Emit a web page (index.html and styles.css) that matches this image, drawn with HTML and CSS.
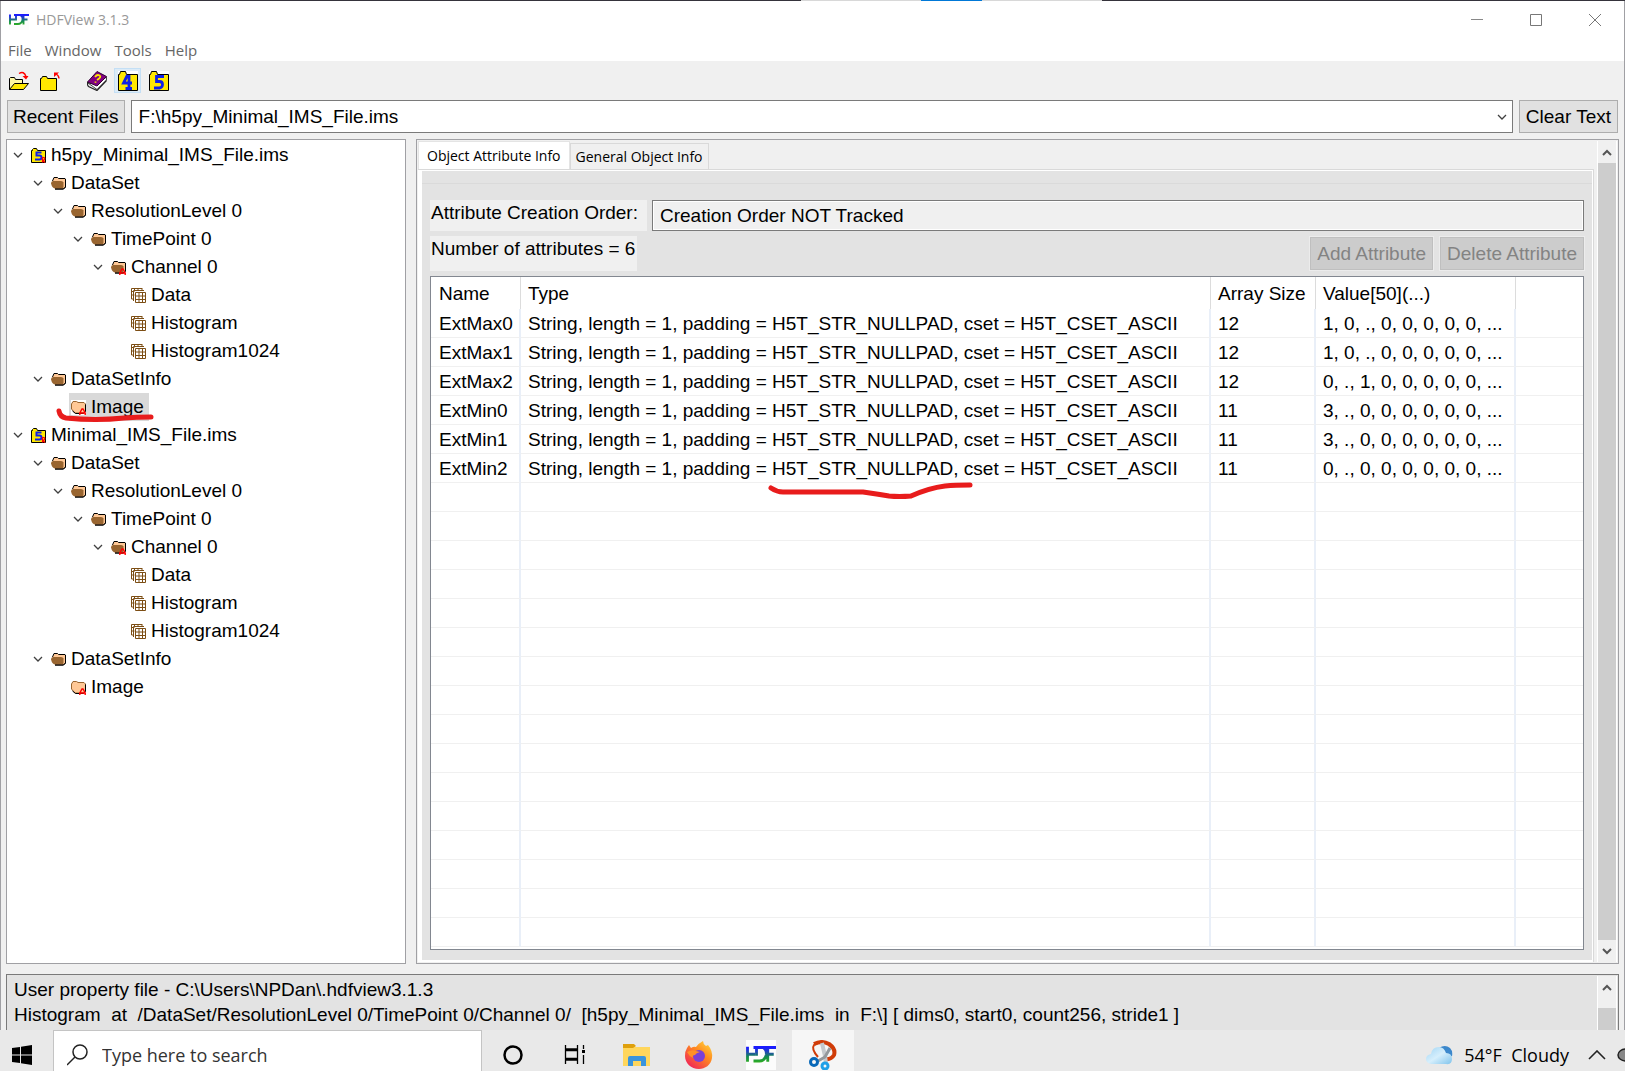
FILE: index.html
```html
<!DOCTYPE html>
<html lang="en">
<head>
<meta charset="utf-8">
<title>HDFView 3.1.3</title>
<link rel="stylesheet" href="styles.css">
</head>
<body>
<svg class="defs" aria-hidden="true">
  <defs>
    <linearGradient id="hdfGrad" gradientUnits="userSpaceOnUse" x1="0" y1="4" x2="0" y2="15">
      <stop offset="0.1" stop-color="#1a1aff"/><stop offset="0.4" stop-color="#2050a8"/><stop offset="0.65" stop-color="#128a50"/><stop offset="1" stop-color="#2fae20"/>
    </linearGradient>
    <linearGradient id="foxGrad" x1="1" y1="0" x2="0.2" y2="1">
      <stop offset="0" stop-color="#ffe040"/><stop offset="0.45" stop-color="#ff8a20"/><stop offset="1" stop-color="#f0205a"/>
    </linearGradient>
    <linearGradient id="cloudGrad" x1="0" y1="0" x2="1" y2="1">
      <stop offset="0" stop-color="#9fd4f4"/><stop offset="0.5" stop-color="#d6effc"/><stop offset="1" stop-color="#7fc3ec"/>
    </linearGradient>
    <symbol id="hdf" viewBox="0 0 20 20">
      <rect width="20" height="20" fill="#fcfcfc"/>
      <path d="M1 4.500v10M1 9.500h5M7 4.500v6M5 5h6q3 1 2.500 5-1 4-4.500 4H5M20 5h-9M13.500 9.500h5M14.500 5v9.500" fill="none" stroke="url(#hdfGrad)" stroke-width="1.900"/>
    </symbol>
    <symbol id="chev" viewBox="0 0 10 6"><path d="M1 1l4 4 4-4" fill="none" stroke="#404040" stroke-width="1.300"/></symbol>
    <symbol id="file5" viewBox="0 0 15 15">
      <path d="M.5 2.500h1v-1l1-1h3l1 2h8v12H.5z" fill="#ffe800" stroke="#000"/>
      <path d="M10.500 4.500H5.500v3h3q2 0 2 2t-2 2H4" fill="none" stroke="#1020e8" stroke-width="2"/>
      <path d="M11.500 14.500v-5h1.500q1.500 1 0 2.500h-1.500l2.500 2.500" fill="none" stroke="#f00" stroke-width="1.200"/>
    </symbol>
    <symbol id="folder" viewBox="0 0 15 15">
      <path d="M1.500 5L3 1.500h3.500l1 1h6.500l.5.500v8l-2 2H4" fill="#ffc896" stroke="#000"/>
      <path d="M0 7.500Q0 5 2 5h8q2 0 2.500 1.500V11q0 1.500-1.500 1.500H4Q1 12 0 7.500z" fill="#996530"/>
      <path d="M4 13h8.500l2-2" fill="none" stroke="#000"/>
    </symbol>
    <symbol id="attr" viewBox="0 0 7 7"><path d="M.8 7V5L3 1h1l2.200 4v2M1 5h5" fill="none" stroke="#f00" stroke-width="1.400"/></symbol>
    <symbol id="folderA" viewBox="0 0 15 15">
      <use href="#folder" width="15" height="15"/><use href="#attr" x="8" y="8" width="7" height="7"/>
    </symbol>
    <symbol id="groupA" viewBox="0 0 15 15">
      <rect width="15" height="15" fill="#fff"/>
      <path d="M.5 4L2 1.500h3.500l1.500 1h6L14.500 4v7l-2 2H4L.5 9z" fill="#ffc896" stroke="#996530"/>
      <path d="M1.500 11l3 2.500h8l2-2V4.500" fill="none" stroke="#000"/>
      <use href="#attr" x="8" y="8" width="7" height="7"/>
    </symbol>
    <symbol id="data" viewBox="0 0 15 15">
      <path d="M.5 11V.5H11M2.500 13V2.500H13M.5 3.500h3M.5 7h3M.5 11h2M3.500 0v3M7 0v3M11 0v3M4.500 4.500h10v10h-10zM4.500 8h10M4.500 11.500h10M8 4.500v10M11.500 4.500v10" fill="none" stroke="#7d4e14"/>
    </symbol>
    <symbol id="open" viewBox="0 0 20 20">
      <path d="M.5 18.500v-11l1-1h4l1 2h7v4" fill="#fff8a0" stroke="#000"/>
      <path d="M.5 18.500l5-6h14l-5 6z" fill="#ffe800" stroke="#000"/>
      <path d="M10 2.500q5-3 7 3" fill="none" stroke="#f00" stroke-width="1.400"/><path d="M13.500 5h6l-2.500 3.500z" fill="#f00"/>
    </symbol>
    <symbol id="close" viewBox="0 0 20 20">
      <path d="M.5 7.500h1l1-2h4l1 2h9v12H.5z" fill="#ffe800" stroke="#000"/>
      <path d="M19 7.500q0-3-3.500-5" fill="none" stroke="#f00" stroke-width="1.400"/><path d="M14 1.500h5l-5 4.500z" fill="#f00"/>
    </symbol>
    <symbol id="book" viewBox="0 0 20 20">
      <path d="M1 12l9 6.500L19.500 9V6L10 13z" fill="#fff" stroke="#444"/>
      <path d="M.5 11L10 .5l9.500 5L10 15z" fill="#800080" stroke="#303"/>
      <path d="M.5 11q-.5 3 1 4.500l8.500 4 9.500-10" fill="none" stroke="#222" stroke-width="1.200"/>
      <path d="M8 6q2-3 4.500-1.500T10 9M8.500 10.500v1.200" fill="none" stroke="#ffe800" stroke-width="1.800"/>
    </symbol>
    <symbol id="f4" viewBox="0 0 20 20">
      <rect width="20" height="20" fill="#fff"/>
      <path d="M.5 3.500h1l1-3h5l1 3h11v16H.5z" fill="#ffe800" stroke="#000"/>
      <path d="M9.500 4L5.500 12H14M11 4v14M7.500 17.500H14" fill="none" stroke="#1020e8" stroke-width="2.800"/>
    </symbol>
    <symbol id="f5" viewBox="0 0 20 20">
      <rect width="20" height="20" fill="#fff"/>
      <path d="M.5 3.500h1l1-3h5l1 3h11v16H.5z" fill="#ffe800" stroke="#000"/>
      <path d="M15 5.500H7.500v5h3q3 0 3 3t-3 3.500H5" fill="none" stroke="#1020e8" stroke-width="2.800"/>
    </symbol>
    <symbol id="up" viewBox="0 0 10 7"><path d="M1 6l4-4 4 4" fill="none" stroke="#555" stroke-width="2"/></symbol>
    <symbol id="down" viewBox="0 0 10 7"><path d="M1 1l4 4 4-4" fill="none" stroke="#555" stroke-width="2"/></symbol>
  </defs>
</svg>

<div class="edge"></div>
<div class="window">
  <header class="chrome">
    <div class="titlebar">
      <svg class="i20"><use href="#hdf"/></svg>
      <span class="title">HDFView 3.1.3</span>
      <div class="winbtns">
        <button aria-label="Minimize"><svg width="12" height="12"><path d="M0 5.500h12" stroke="#888" fill="none"/></svg></button>
        <button aria-label="Maximize"><svg width="12" height="12"><path d="M.5.500h11v11H.5z" stroke="#777" fill="none"/></svg></button>
        <button aria-label="Close"><svg width="12" height="12"><path d="M0 0l12 12M12 0L0 12" stroke="#777" fill="none"/></svg></button>
      </div>
    </div>
    <nav class="menu">
      <button>File</button><button>Window</button><button>Tools</button><button>Help</button>
    </nav>
  </header>

  <div class="toolbar">
    <button aria-label="Open"><svg class="i20"><use href="#open"/></svg></button>
    <button aria-label="Close file"><svg class="i20"><use href="#close"/></svg></button>
    <button class="book" aria-label="Help"><svg class="i20"><use href="#book"/></svg></button>
    <button class="hot" aria-label="HDF4 library"><svg class="i20"><use href="#f4"/></svg></button>
    <button aria-label="HDF5 library"><svg class="i20"><use href="#f5"/></svg></button>
  </div>

  <div class="address">
    <button class="btn">Recent Files</button>
    <div class="combo">
      <input type="text" aria-label="File path" value="F:\h5py_Minimal_IMS_File.ims">
      <svg class="chev"><use href="#chev"/></svg>
    </div>
    <button class="btn wide">Clear Text</button>
  </div>

  <main class="split">
    <ul class="tree">
      <li class="d0"><svg class="chev"><use href="#chev"/></svg><svg class="i15"><use href="#file5"/></svg><span>h5py_Minimal_IMS_File.ims</span></li>
      <li class="d1"><svg class="chev"><use href="#chev"/></svg><svg class="i15"><use href="#folder"/></svg><span>DataSet</span></li>
      <li class="d2"><svg class="chev"><use href="#chev"/></svg><svg class="i15"><use href="#folder"/></svg><span>ResolutionLevel 0</span></li>
      <li class="d3"><svg class="chev"><use href="#chev"/></svg><svg class="i15"><use href="#folder"/></svg><span>TimePoint 0</span></li>
      <li class="d4"><svg class="chev"><use href="#chev"/></svg><svg class="i15"><use href="#folderA"/></svg><span>Channel 0</span></li>
      <li class="d5 leaf"><svg class="i15"><use href="#data"/></svg><span>Data</span></li>
      <li class="d5 leaf"><svg class="i15"><use href="#data"/></svg><span>Histogram</span></li>
      <li class="d5 leaf"><svg class="i15"><use href="#data"/></svg><span>Histogram1024</span></li>
      <li class="d1"><svg class="chev"><use href="#chev"/></svg><svg class="i15"><use href="#folder"/></svg><span>DataSetInfo</span></li>
      <li class="d2 leaf"><div class="picked"><svg class="i15"><use href="#groupA"/></svg><span>Image</span>
        <svg class="mark mark-tree" viewBox="0 0 96 16"><path d="M2 3q1 6 7 7q30 3 58 0q12-1 27-1" fill="none" stroke="#e81c1c" stroke-width="5" stroke-linecap="round"/></svg></div></li>
      <li class="d0"><svg class="chev"><use href="#chev"/></svg><svg class="i15"><use href="#file5"/></svg><span>Minimal_IMS_File.ims</span></li>
      <li class="d1"><svg class="chev"><use href="#chev"/></svg><svg class="i15"><use href="#folder"/></svg><span>DataSet</span></li>
      <li class="d2"><svg class="chev"><use href="#chev"/></svg><svg class="i15"><use href="#folder"/></svg><span>ResolutionLevel 0</span></li>
      <li class="d3"><svg class="chev"><use href="#chev"/></svg><svg class="i15"><use href="#folder"/></svg><span>TimePoint 0</span></li>
      <li class="d4"><svg class="chev"><use href="#chev"/></svg><svg class="i15"><use href="#folderA"/></svg><span>Channel 0</span></li>
      <li class="d5 leaf"><svg class="i15"><use href="#data"/></svg><span>Data</span></li>
      <li class="d5 leaf"><svg class="i15"><use href="#data"/></svg><span>Histogram</span></li>
      <li class="d5 leaf"><svg class="i15"><use href="#data"/></svg><span>Histogram1024</span></li>
      <li class="d1"><svg class="chev"><use href="#chev"/></svg><svg class="i15"><use href="#folder"/></svg><span>DataSetInfo</span></li>
      <li class="d2 leaf"><svg class="i15"><use href="#groupA"/></svg><span>Image</span></li>
    </ul>

    <section class="detail">
      <div class="tabwrap">
        <div class="tabs" role="tablist">
          <button class="tab on" role="tab" aria-selected="true">Object Attribute Info</button>
          <button class="tab" role="tab" aria-selected="false">General Object Info</button>
        </div>
        <div class="page">
          <div class="group">
            <div class="order">
              <label for="order">Attribute Creation Order:</label>
              <input id="order" type="text" readonly value="Creation Order NOT Tracked">
            </div>
            <div class="count">
              <span class="num">Number of attributes = 6</span>
              <button class="btn" disabled>Add Attribute</button>
              <button class="btn" disabled>Delete Attribute</button>
            </div>
            <div class="gridbox">
              <table>
                <colgroup><col class="c1"><col class="c2"><col class="c3"><col class="c4"><col></colgroup>
                <thead><tr><th>Name</th><th>Type</th><th>Array Size</th><th>Value[50](...)</th><th></th></tr></thead>
                <tbody>
                  <tr><td>ExtMax0</td><td>String, length = 1, padding = H5T_STR_NULLPAD, cset = H5T_CSET_ASCII</td><td>12</td><td>1, 0, ., 0, 0, 0, 0, 0, ...</td><td></td></tr>
                  <tr><td>ExtMax1</td><td>String, length = 1, padding = H5T_STR_NULLPAD, cset = H5T_CSET_ASCII</td><td>12</td><td>1, 0, ., 0, 0, 0, 0, 0, ...</td><td></td></tr>
                  <tr><td>ExtMax2</td><td>String, length = 1, padding = H5T_STR_NULLPAD, cset = H5T_CSET_ASCII</td><td>12</td><td>0, ., 1, 0, 0, 0, 0, 0, ...</td><td></td></tr>
                  <tr><td>ExtMin0</td><td>String, length = 1, padding = H5T_STR_NULLPAD, cset = H5T_CSET_ASCII</td><td>11</td><td>3, ., 0, 0, 0, 0, 0, 0, ...</td><td></td></tr>
                  <tr><td>ExtMin1</td><td>String, length = 1, padding = H5T_STR_NULLPAD, cset = H5T_CSET_ASCII</td><td>11</td><td>3, ., 0, 0, 0, 0, 0, 0, ...</td><td></td></tr>
                  <tr><td>ExtMin2</td><td>String, length = 1, padding = <span class="marked">H5T_STR_NULLPAD<svg class="mark mark-cell" viewBox="0 0 204 18"><path d="M3 4q6 4 12 4h80q14 2 26 4 10 1 22 0 18-8 34-10 10-1 25-1" fill="none" stroke="#e81c1c" stroke-width="5" stroke-linecap="round"/></svg></span>, cset = H5T_CSET_ASCII</td><td>11</td><td>0, ., 0, 0, 0, 0, 0, 0, ...</td><td></td></tr>
                  <tr><td></td><td></td><td></td><td></td><td></td></tr>
                  <tr><td></td><td></td><td></td><td></td><td></td></tr>
                  <tr><td></td><td></td><td></td><td></td><td></td></tr>
                  <tr><td></td><td></td><td></td><td></td><td></td></tr>
                  <tr><td></td><td></td><td></td><td></td><td></td></tr>
                  <tr><td></td><td></td><td></td><td></td><td></td></tr>
                  <tr><td></td><td></td><td></td><td></td><td></td></tr>
                  <tr><td></td><td></td><td></td><td></td><td></td></tr>
                  <tr><td></td><td></td><td></td><td></td><td></td></tr>
                  <tr><td></td><td></td><td></td><td></td><td></td></tr>
                  <tr><td></td><td></td><td></td><td></td><td></td></tr>
                  <tr><td></td><td></td><td></td><td></td><td></td></tr>
                  <tr><td></td><td></td><td></td><td></td><td></td></tr>
                  <tr><td></td><td></td><td></td><td></td><td></td></tr>
                  <tr><td></td><td></td><td></td><td></td><td></td></tr>
                  <tr><td></td><td></td><td></td><td></td><td></td></tr>
                </tbody>
              </table>
            </div>
          </div>
        </div>
      </div>
      <div class="scroll"><button aria-label="Scroll up"><svg class="arrow"><use href="#up"/></svg></button><div class="thumb"></div><button aria-label="Scroll down"><svg class="arrow"><use href="#down"/></svg></button></div>
    </section>
  </main>

  <section class="log">
    <div class="lines">
      <p>User property file - C:\Users\NPDan\.hdfview3.1.3</p>
      <p>Histogram  at  /DataSet/ResolutionLevel 0/TimePoint 0/Channel 0/  [h5py_Minimal_IMS_File.ims  in  F:\] [ dims0, start0, count256, stride1 ]</p>
    </div>
    <div class="scroll low"><button aria-label="Scroll log up"><svg class="arrow"><use href="#up"/></svg></button><div class="thumb"></div></div>
  </section>
</div>

<footer class="taskbar">
  <button class="start" aria-label="Start"><svg width="20" height="20"><path d="M0 3l8-1v7.500H0zM9 1.800L20 0v9.500H9zM0 10.500h8V18l-8-1zM9 10.500h11V20L9 18.200z" fill="#000"/></svg></button>
  <label class="search"><svg width="21" height="22"><circle cx="13" cy="8" r="7" fill="none" stroke="#222" stroke-width="1.500"/><path d="M8 13l-8 8" stroke="#222" stroke-width="1.500"/></svg><input type="text" aria-label="Search" placeholder="Type here to search"></label>
  <div class="apps">
    <button aria-label="Cortana"><svg width="22" height="22"><circle cx="11" cy="11" r="8.500" fill="none" stroke="#000" stroke-width="2.500"/></svg></button>
    <button aria-label="Task view"><svg width="22" height="22"><path d="M1.500 1v4h12V1M1.500 6.500h12v8h-12zM1.500 20v-4h12v4M19.500 1v4M19.500 11v9" fill="none" stroke="#000" stroke-width="1.300"/><path d="M18 6h3v3h-3z"/></svg></button>
    <button aria-label="File Explorer"><svg width="28" height="24"><path d="M0 1h10l2 3h15v19H0z" fill="#ffd65c"/><path d="M0 1h11l2 2-3 2H0z" fill="#dfa00c"/><path d="M5 23v-8q0-2 2-2h14q2 0 2 2v8h-5v-5h-8v5z" fill="#3a94dc"/></svg></button>
    <button aria-label="Firefox"><svg width="30" height="30"><path d="M3 8l2-3 2 3q3-2 5-1Q15 3 19 1q0 3 3 5l2-1q5 6 4 13c-1 7-7 11-13 11C7 29 1 23 1 16q0-5 2-8z" fill="url(#foxGrad)"/><circle cx="15" cy="16" r="6" fill="#7a40d8"/><path d="M3 12q5-3 9-1l4 1q-4 1-5 3-3 0-2 3-4-2-6-6z" fill="#ff9028"/></svg></button>
    <button aria-label="HDFView"><svg width="30" height="30"><use href="#hdf"/></svg></button>
    <button class="active" aria-label="Snipping Tool"><svg width="28" height="30"><path d="M9 17Q2 9 5 5q3-2 7-3" fill="none" stroke="#d03c08" stroke-width="2"/><path d="M5 4q8-4 15 0 7 5 5 11-3 5-9 4" fill="none" stroke="#d03c08" stroke-width="4"/><path d="M13 3l3 13 1 7" stroke="#c4c8cc" stroke-width="4" fill="none"/><path d="M21 8l-5 9-7 4" stroke="#94989c" stroke-width="3" fill="none"/><circle cx="5" cy="22" r="3.500" fill="none" stroke="#0868b8" stroke-width="3"/><circle cx="16" cy="26" r="3" fill="none" stroke="#20a0e8" stroke-width="3"/></svg></button>
  </div>
  <div class="tray">
    <svg width="28" height="20"><path d="M14 3q6-4 11 0 3 3 2 8l-5 2z" fill="#3c88cc"/><path d="M6 19q-5-1-5-5t5-5q1-7 8-7 5 0 7 6 6 0 6 6t-6 5z" fill="url(#cloudGrad)"/></svg>
    <span>54°F&nbsp; Cloudy</span>
    <svg width="18" height="10"><path d="M1 9l8-8 8 8" fill="none" stroke="#222" stroke-width="1.600"/></svg>
    <svg class="cut" width="8" height="16"><ellipse cx="9" cy="8" rx="8" ry="6" fill="#888" stroke="#222" stroke-width="1.500"/></svg>
  </div>
</footer>
</body>
</html>
```

FILE: styles.css
```css
* { box-sizing: border-box; }
html, body { height: 100%; margin: 0; }
body {
  display: flex; flex-direction: column; overflow: hidden;
  background: #f0f0f0; color: #000;
  font: 19px/28px "Liberation Sans", Arial, sans-serif;
}
button, input { font: inherit; color: inherit; margin: 0; padding: 0; border: 0; background: none; }
button { display: flex; align-items: center; justify-content: center; white-space: nowrap; }
svg { display: block; flex: none; }
.defs { position: absolute; width: 0; height: 0; }
.i20 { width: 20px; height: 20px; }
.i15 { width: 15px; height: 15px; }
.chev { width: 10px; height: 6px; }
.arrow { width: 10px; height: 7px; }

.edge { flex: none; height: 1px; background: linear-gradient(90deg, #35333b 0 49.3%, #d8d8d8 49.3% 56.7%, #0078d7 56.7% 60.4%, #d8d8d8 60.4% 67.8%, #35333b 67.8%); }
.window { flex: 1; min-height: 0; display: flex; flex-direction: column; border: solid #a0a0a4; border-width: 0 1px; }

.chrome { background: #fff; font-family: "Open Sans", "Noto Sans", sans-serif; font-size: 15px; }
.titlebar { display: flex; align-items: center; height: 37px; padding-left: 8px; gap: 7px; color: #999; }
.title { flex: 1; font-size: 14px; }
.winbtns { display: flex; }
.winbtns button { width: 59px; height: 32px; }
.menu { display: flex; align-items: center; gap: 13px; height: 23px; padding: 1px 0 0 7px; color: #666; }

.toolbar { display: flex; align-items: center; height: 39px; padding: 0 4px; gap: 4px; }
.toolbar button { width: 27px; height: 25px; border: 1px solid transparent; }
.toolbar .book { margin-left: 16px; }
.toolbar .hot { background: #dcebf7; border-color: #c4dff5; }

.address { display: flex; align-items: center; gap: 6px; padding: 0 6px 6px 6px; }
.btn { height: 33px; padding: 0 5px; background: #e1e1e1; border: 1px solid #adadad; }
.btn.wide { padding: 0 6px; }
.btn:disabled { padding: 0 6px; background: #ccc; border-color: #bfbfbf; outline: 1px solid #ececec; color: #838383; }
.combo { flex: 1; display: flex; align-items: center; height: 33px; padding: 0 5px 0 7px; background: #fff; border: 1px solid #7a7a7a; }
.combo input { flex: 1; min-width: 0; outline: 0; }

.split { flex: 1; min-height: 0; display: flex; gap: 10px; padding: 0 5px; }
.tree { flex: 0 0 400px; margin: 0; padding: 1px 0; list-style: none; background: #fff; border: 1px solid #a0a0a4; }
.tree li { display: flex; align-items: center; gap: 5px; height: 28px; padding-left: 6px; white-space: pre; }
.tree .chev { margin-right: 3px; }
.tree .leaf .i15 { margin-left: 18px; }
.tree .d1 { padding-left: 26px; }
.tree .d2 { padding-left: 46px; }
.tree .d3 { padding-left: 66px; }
.tree .d4 { padding-left: 86px; }
.tree .d5 { padding-left: 106px; }
.picked { position: relative; display: flex; align-items: center; gap: 5px; height: 28px; margin-left: 16px; padding: 0 5px 0 2px; background: #d9d9d9; }
.tree .picked .i15 { margin-left: 0; }
.mark { position: absolute; overflow: visible; }
.mark-tree { left: -12px; top: 15px; width: 96px; height: 16px; }

.detail { flex: 1; min-width: 0; display: flex; padding: 1px; border: 1px solid #a0a0a4; }
.tabwrap { flex: 1; min-width: 0; display: flex; flex-direction: column; }
.tabs { display: flex; align-items: flex-end; height: 28px; font: 14px/20px "Open Sans", "Noto Sans", sans-serif; }
.tab { height: 26px; padding: 0 5px; border: 1px solid #d9d9d9; border-bottom: 0; }
.tab.on { height: 28px; padding: 0 8px; background: #fff; border-color: #e4e4e4; }
.page { flex: 1; min-height: 0; display: flex; padding: 1px 1px 2px 4px; background: #fff; border: 1px solid #d9d9d9; border-width: 1px 1px 0 0; margin-right: 3px; }
.group { flex: 1; min-width: 0; display: flex; flex-direction: column; padding: 29px 8px 10px; background: linear-gradient(#e3e3e3 12px, #dadada 12px 13px, #e3e3e3 13px); }
.order { display: flex; gap: 5px; height: 31px; }
.order label { padding: 0 9px 0 1px; background: #f0f0f0; line-height: 26px; }
.order input { flex: 1; min-width: 0; padding: 0 7px; background: #f0f0f0; border: 1px solid #7a7a7a; box-shadow: inset 0 0 0 1px #fff; outline: 0; }
.count { display: flex; gap: 7px; align-items: center; height: 35px; margin: 5px 0; }
.num { height: 35px; padding: 0 2px 0 1px; margin-right: auto; background: #f0f0f0; line-height: 26px; }
.gridbox { flex: 1; min-height: 0; overflow: hidden; background: #fff; border: 1px solid #828790; }
table { width: 100%; table-layout: fixed; border-collapse: separate; border-spacing: 0; }
.c1 { width: 90px; } .c2 { width: 690px; } .c3 { width: 105px; } .c4 { width: 200px; }
th, td { padding: 2px 0 0 8px; text-align: left; font-weight: 400; white-space: nowrap; }
th { height: 32px; border-right: 1px solid #dcdcdc; }
td { height: 29px; line-height: 26px; border-right: 2px solid #e9eff8; border-bottom: 1px solid #f0f0f0; }
th:not(:first-child), td:not(:first-child) { padding-left: 7px; }
th:last-child, td:last-child { border-right: 0; }
.marked { position: relative; }
.mark-cell { left: -4px; top: 26px; width: 204px; height: 18px; }

.scroll { flex: none; display: flex; flex-direction: column; width: 20px; border: solid #fff; border-width: 0 1px; background: #f0f0f0; }
.scroll button { height: 22px; }
.thumb { flex: 1; background: #cdcdcd; }

.log { flex: none; display: flex; height: 56px; margin: 10px 5px 0; padding: 1px 1px 0; background: #e3e3e3; border: 1px solid #7a7a7a; border-bottom: 0; overflow: hidden; }
.lines { flex: 1; min-width: 0; padding: 1px 6px; line-height: 25px; }
.lines p { margin: 0; white-space: pre; }
.low button { height: 32px; padding-bottom: 10px; }

.taskbar { flex: none; display: flex; height: 41px; overflow: hidden; background: #e9e9e9; font: 18px/24px "Open Sans", "Noto Sans", sans-serif; }
.taskbar > * { height: 49px; }
.start { width: 53px; padding-right: 10px; }
.search { flex: 0 0 429px; display: flex; align-items: center; gap: 14px; padding-left: 13px; background: #fff; border: 1px solid #c4c4c4; }
.search input { flex: 1; min-width: 0; outline: 0; }
.search input::placeholder { color: #333; opacity: 1; }
.apps { display: flex; flex: 1; }
.apps button { width: 62px; height: 49px; }
.apps .active { background: #f6f6f6; }
.tray { display: flex; align-items: center; gap: 11px; }
.tray span { margin-right: 8px; }
```
